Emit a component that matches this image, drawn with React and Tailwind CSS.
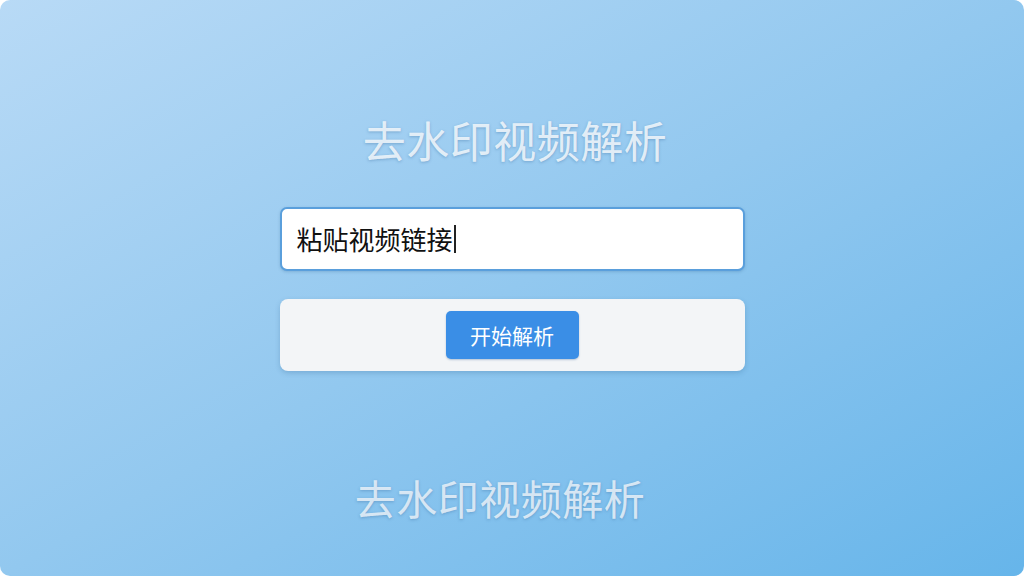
import React from "react";

const font = { fontFamily: '"Noto Sans CJK SC", "Noto Sans", sans-serif' };

export default function App() {
  return (
    <div
      className="w-[1024px] h-[576px] overflow-hidden rounded-[10px] bg-gradient-to-br from-[#b8daf6] via-[#92c8ef] to-[#66b5ea] flex flex-col items-center"
      style={font}
    >
      <h1 className="mt-[118px] ml-[6px] text-[43px] leading-none text-[#f0f6fb]/90 tracking-[0.5px] [text-shadow:0_1px_3px_rgba(60,110,160,0.4)]">
        去水印视频解析
      </h1>

      <div className="mt-[46px] w-[465px] h-[64px] rounded-[7px] border-2 border-[#5a9fdc] bg-white shadow-[0_1px_3px_rgba(40,90,140,0.25)] flex items-center px-[15px]">
        <span className="text-[26px] text-[#111] leading-none">粘贴视频链接</span>
        <span className="ml-[1px] w-[2px] h-[28px] bg-[#222]" />
      </div>

      <div className="mt-[28px] w-[465px] h-[72px] rounded-[8px] bg-[#f3f5f7] shadow-[0_2px_5px_rgba(40,90,140,0.25)] flex items-center justify-center">
        <button className="w-[133px] h-[48px] rounded-[5px] bg-[#3a8ee6] text-white text-[21px] leading-none shadow-[0_1px_2px_rgba(30,80,140,0.3)]">
          开始解析
        </button>
      </div>

      <h2 className="mt-[106px] mr-[24px] text-[41px] leading-none text-[#eaf2f9]/85 tracking-[0.5px] [text-shadow:0_1px_3px_rgba(60,110,160,0.4)]">
        去水印视频解析
      </h2>
    </div>
  );
}
